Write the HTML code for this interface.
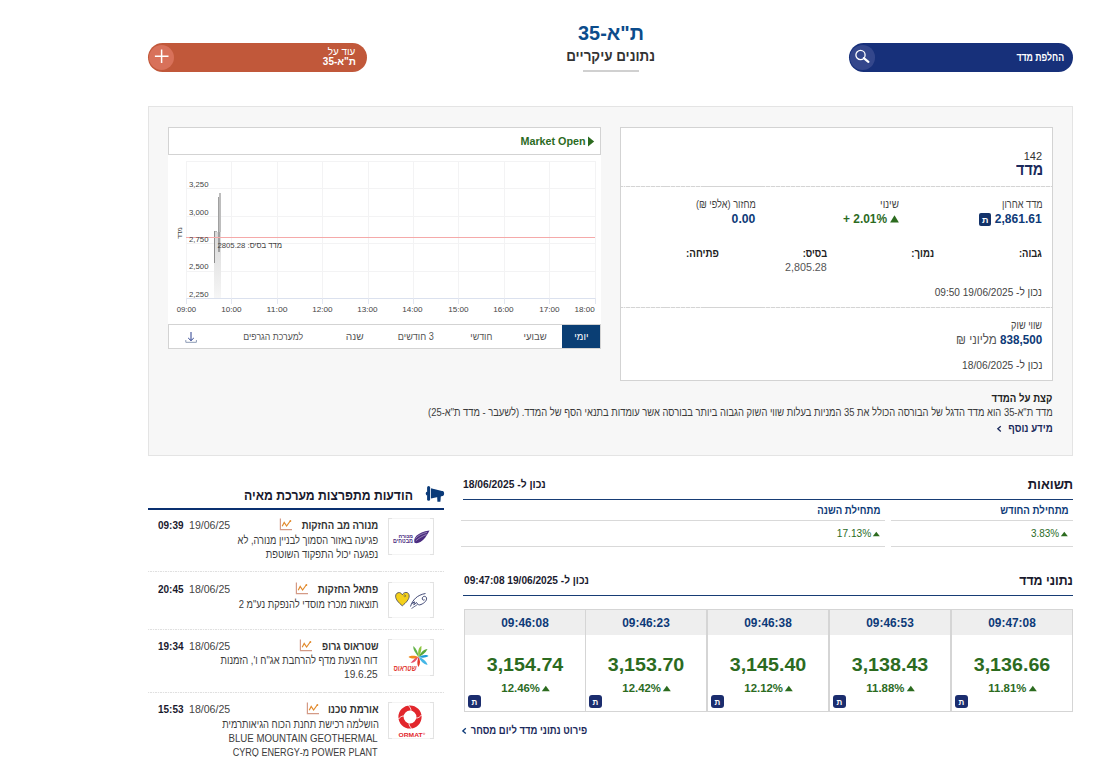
<!DOCTYPE html>
<html lang="he" dir="rtl">
<head>
<meta charset="utf-8">
<style>
*{margin:0;padding:0;box-sizing:border-box;}
html,body{width:1107px;height:757px;overflow:hidden;background:#fff;}
body{font-family:"Liberation Sans",sans-serif;color:#333;position:relative;}
.a{position:absolute;}
.t{position:absolute;white-space:nowrap;line-height:1;}
</style>
</head>
<body>
<div class="a" style="left:148px;top:43px;width:219px;height:29px;border-radius:14.5px;background:#c1583a;"></div>
<div class="a" style="left:149px;top:44.5px;width:25px;height:25.0px;border-radius:50%;background:#d8715a;"></div>
<svg class="a" style="left:154px;top:49px" width="15" height="15" viewBox="0 0 15 15"><path d="M7.6 0.5v13.6M0.9 7.3h13.6" stroke="#fff" stroke-width="1.5"/></svg>
<div class="a" style="left:849px;top:43px;width:224px;height:29px;border-radius:14.5px;background:#17307a;"></div>
<div class="a" style="left:849.5px;top:44.5px;width:25.5px;height:25.0px;border-radius:50%;background:#34478c;"></div>
<svg class="a" style="left:853px;top:48px" width="20" height="17" viewBox="0 0 20 17"><circle cx="7.5" cy="7" r="4.6" fill="none" stroke="#fff" stroke-width="1.3"/><path d="M10.8 10.2l4.6 3.6" stroke="#fff" stroke-width="2.2" stroke-linecap="round"/></svg>
<div class="a" style="left:583px;top:70px;width:56px;height:2px;background:#d0d0d0;"></div>
<div class="a" style="left:148px;top:106px;width:925px;height:350px;background:#f7f7f7;border:1px solid #e4e4e4;"></div>
<div class="a" style="left:168px;top:127px;width:433px;height:28px;background:#fff;border:1px solid #d3d3d3;"></div>
<svg class="a" style="left:587px;top:136px" width="8" height="11" viewBox="0 0 8 11"><path d="M1 0.5L7.2 5.5L1 10.5z" fill="#2c6b1f"/></svg>
<div class="a" style="left:168px;top:155px;width:433px;height:169px;background:#fff;"></div>
<div class="a" style="left:185.9px;top:161px;width:1px;height:138px;background:#f3f3f4;"></div><div class="a" style="left:231.3px;top:161px;width:1px;height:138px;background:#f3f3f4;"></div><div class="a" style="left:276.7px;top:161px;width:1px;height:138px;background:#f3f3f4;"></div><div class="a" style="left:322.1px;top:161px;width:1px;height:138px;background:#f3f3f4;"></div><div class="a" style="left:367.5px;top:161px;width:1px;height:138px;background:#f3f3f4;"></div><div class="a" style="left:412.9px;top:161px;width:1px;height:138px;background:#f3f3f4;"></div><div class="a" style="left:458.3px;top:161px;width:1px;height:138px;background:#f3f3f4;"></div><div class="a" style="left:503.7px;top:161px;width:1px;height:138px;background:#f3f3f4;"></div><div class="a" style="left:549.1px;top:161px;width:1px;height:138px;background:#f3f3f4;"></div><div class="a" style="left:594.5px;top:161px;width:1px;height:138px;background:#f3f3f4;"></div><div class="a" style="left:186px;top:160.5px;width:409px;height:1px;background:#f3f3f4;"></div><div class="a" style="left:186px;top:188.1px;width:409px;height:1px;background:#f3f3f4;"></div><div class="a" style="left:186px;top:215.7px;width:409px;height:1px;background:#f3f3f4;"></div><div class="a" style="left:186px;top:242.7px;width:409px;height:1px;background:#f3f3f4;"></div><div class="a" style="left:186px;top:270.7px;width:409px;height:1px;background:#f3f3f4;"></div>
<div class="a" style="left:186px;top:298px;width:409px;height:1px;background:#dbe1ee;"></div>
<div class="a" style="left:185.9px;top:298px;width:1.0px;height:6px;background:#e3e7f1;"></div>
<div class="a" style="left:231.3px;top:298px;width:1.0px;height:6px;background:#e3e7f1;"></div>
<div class="a" style="left:276.7px;top:298px;width:1.0px;height:6px;background:#e3e7f1;"></div>
<div class="a" style="left:322.1px;top:298px;width:1.0px;height:6px;background:#e3e7f1;"></div>
<div class="a" style="left:367.5px;top:298px;width:1.0px;height:6px;background:#e3e7f1;"></div>
<div class="a" style="left:412.9px;top:298px;width:1.0px;height:6px;background:#e3e7f1;"></div>
<div class="a" style="left:458.3px;top:298px;width:1.0px;height:6px;background:#e3e7f1;"></div>
<div class="a" style="left:503.7px;top:298px;width:1.0px;height:6px;background:#e3e7f1;"></div>
<div class="a" style="left:549.1px;top:298px;width:1.0px;height:6px;background:#e3e7f1;"></div>
<div class="a" style="left:594.5px;top:298px;width:1.0px;height:6px;background:#e3e7f1;"></div>
<div class="a" style="left:213.5px;top:232px;width:7.5px;height:66px;background:linear-gradient(#d8d8d8,#f6f6f6);"></div>
<div class="a" style="left:213.5px;top:230.5px;width:1.6999999999999886px;height:32.0px;background:#8e8e8e;"></div>
<div class="a" style="left:215.2px;top:230.5px;width:2.3000000000000114px;height:1.5px;background:#b5b5b5;"></div>
<div class="a" style="left:217.6px;top:197px;width:2.0px;height:55px;background:#a0a0a0;"></div>
<div class="a" style="left:219.4px;top:192.7px;width:1.4000000000000057px;height:39.30000000000001px;background:#bdbdbd;"></div>
<div class="a" style="left:186px;top:237.2px;width:409px;height:1.200000000000017px;background:#f5a9a9;"></div>
<div class="a" style="left:168px;top:324px;width:433px;height:25px;background:#fff;border:1px solid #d3d3d3;"></div>
<div class="a" style="left:562px;top:325px;width:38px;height:23px;background:#0a3e74;"></div>
<svg class="a" style="left:184px;top:330px" width="14" height="14" viewBox="0 0 14 14"><path d="M7 2v8.5M4.2 8l2.8 2.6L9.8 8" fill="none" stroke="#2b3f8f" stroke-width="1"/><path d="M1.8 10v2.3h10.6V10" fill="none" stroke="#8d9bb5" stroke-width="1"/></svg>
<div class="a" style="left:620px;top:127px;width:433px;height:254px;background:#fff;border:1px solid #d3d3d3;"></div>
<div class="a" style="left:621px;top:186px;width:431px;height:1px;background:repeating-linear-gradient(90deg,#d4d4d4 0 2px,#f2f2f2 2px 2.5px);"></div>
<div class="a" style="left:621px;top:307px;width:431px;height:1px;background:repeating-linear-gradient(90deg,#d4d4d4 0 2px,#f2f2f2 2px 2.5px);"></div>
<div class="a" style="left:979px;top:213px;width:12px;height:13px;border-radius:2px;background:#14336a;"></div>
<svg class="a" style="left:890px;top:215px" width="10" height="8" viewBox="0 0 10 8"><path d="M4.5 0.2L8.9 7.6H0.1z" fill="#2c6b1f"/></svg>
<div class="a" style="left:463px;top:499px;width:610px;height:1.1999999999999886px;background:#173d75;"></div>
<div class="a" style="left:461px;top:520px;width:424px;height:1px;background:#d9d9d9;"></div>
<div class="a" style="left:891px;top:520px;width:182px;height:1px;background:#d9d9d9;"></div>
<div class="a" style="left:461px;top:546px;width:424px;height:1px;background:#d9d9d9;"></div>
<div class="a" style="left:891px;top:546px;width:182px;height:1px;background:#d9d9d9;"></div>
<div class="a" style="left:463px;top:594.6px;width:610px;height:1.1999999999999318px;background:#173d75;"></div>
<div class="a" style="left:464px;top:609px;width:122px;height:103px;background:#fff;border:1px solid #d5d5d5;"></div>
<div class="a" style="left:465px;top:610px;width:120px;height:25px;background:#eeeeee;"></div>
<div class="a" style="left:468px;top:695px;width:13px;height:13px;border-radius:3px;background:#1b2d6e;"></div>
<div class="a" style="left:585px;top:609px;width:122px;height:103px;background:#fff;border:1px solid #d5d5d5;"></div>
<div class="a" style="left:586px;top:610px;width:120px;height:25px;background:#eeeeee;"></div>
<div class="a" style="left:589px;top:695px;width:13px;height:13px;border-radius:3px;background:#1b2d6e;"></div>
<div class="a" style="left:707px;top:609px;width:122px;height:103px;background:#fff;border:1px solid #d5d5d5;"></div>
<div class="a" style="left:708px;top:610px;width:120px;height:25px;background:#eeeeee;"></div>
<div class="a" style="left:711px;top:695px;width:13px;height:13px;border-radius:3px;background:#1b2d6e;"></div>
<div class="a" style="left:829px;top:609px;width:122px;height:103px;background:#fff;border:1px solid #d5d5d5;"></div>
<div class="a" style="left:830px;top:610px;width:120px;height:25px;background:#eeeeee;"></div>
<div class="a" style="left:833px;top:695px;width:13px;height:13px;border-radius:3px;background:#1b2d6e;"></div>
<div class="a" style="left:951px;top:609px;width:122px;height:103px;background:#fff;border:1px solid #d5d5d5;"></div>
<div class="a" style="left:952px;top:610px;width:120px;height:25px;background:#eeeeee;"></div>
<div class="a" style="left:955px;top:695px;width:13px;height:13px;border-radius:3px;background:#1b2d6e;"></div>
<div class="a" style="left:148px;top:508px;width:296px;height:2px;background:#0a3070;"></div>
<svg class="a" style="left:420px;top:482px" width="28" height="24" viewBox="0 0 28 24"><rect x="7.1" y="4.1" width="3" height="14.6" rx="1.5" fill="#0a3a78"/><ellipse cx="6.9" cy="11.6" rx="1.1" ry="1.8" fill="#0a3a78"/><path d="M10.9 6.3L22 9.1H22.6C23.5 9.1 24.1 10.3 24.1 11.6C24.1 12.9 23.5 14 22.6 14L10.9 16.6Z" fill="#0a3a78"/><path d="M17.1 13.6H20.9L20.4 19.7H17.4Z" fill="#0a3a78"/></svg>
<div class="a" style="left:388px;top:518px;width:46px;height:37px;background:#fff;border:1px solid #f4f4f4;border-left-color:#e2e2e2;border-right-color:#e2e2e2;border-radius:2px;"></div>
<div class="a" style="left:388px;top:518px;width:4px;height:1px;background:#e2e2e2;"></div>
<div class="a" style="left:388px;top:554px;width:4px;height:1px;background:#e2e2e2;"></div>
<div class="a" style="left:430px;top:518px;width:4px;height:1px;background:#e2e2e2;"></div>
<div class="a" style="left:430px;top:554px;width:4px;height:1px;background:#e2e2e2;"></div>
<div class="a" style="left:388px;top:582px;width:46px;height:36px;background:#fff;border:1px solid #f4f4f4;border-left-color:#e2e2e2;border-right-color:#e2e2e2;border-radius:2px;"></div>
<div class="a" style="left:388px;top:582px;width:4px;height:1px;background:#e2e2e2;"></div>
<div class="a" style="left:388px;top:617px;width:4px;height:1px;background:#e2e2e2;"></div>
<div class="a" style="left:430px;top:582px;width:4px;height:1px;background:#e2e2e2;"></div>
<div class="a" style="left:430px;top:617px;width:4px;height:1px;background:#e2e2e2;"></div>
<div class="a" style="left:388px;top:639px;width:46px;height:37px;background:#fff;border:1px solid #f4f4f4;border-left-color:#e2e2e2;border-right-color:#e2e2e2;border-radius:2px;"></div>
<div class="a" style="left:388px;top:639px;width:4px;height:1px;background:#e2e2e2;"></div>
<div class="a" style="left:388px;top:675px;width:4px;height:1px;background:#e2e2e2;"></div>
<div class="a" style="left:430px;top:639px;width:4px;height:1px;background:#e2e2e2;"></div>
<div class="a" style="left:430px;top:675px;width:4px;height:1px;background:#e2e2e2;"></div>
<div class="a" style="left:388px;top:702px;width:46px;height:37px;background:#fff;border:1px solid #f4f4f4;border-left-color:#e2e2e2;border-right-color:#e2e2e2;border-radius:2px;"></div>
<div class="a" style="left:388px;top:702px;width:4px;height:1px;background:#e2e2e2;"></div>
<div class="a" style="left:388px;top:738px;width:4px;height:1px;background:#e2e2e2;"></div>
<div class="a" style="left:430px;top:702px;width:4px;height:1px;background:#e2e2e2;"></div>
<div class="a" style="left:430px;top:738px;width:4px;height:1px;background:#e2e2e2;"></div>
<div class="a" style="left:148px;top:571px;width:296px;height:1px;background:repeating-linear-gradient(90deg,#e0e0e0 0 1.5px,#fafafa 1.5px 2.5px);"></div>
<div class="a" style="left:148px;top:629px;width:296px;height:1px;background:repeating-linear-gradient(90deg,#e0e0e0 0 1.5px,#fafafa 1.5px 2.5px);"></div>
<div class="a" style="left:148px;top:692px;width:296px;height:1px;background:repeating-linear-gradient(90deg,#e0e0e0 0 1.5px,#fafafa 1.5px 2.5px);"></div>
<svg class="a" style="left:279px;top:518px" width="14" height="13" viewBox="0 0 14 13"><path d="M1.4 0.5V11.6H13" fill="none" stroke="#d49a86" stroke-width="1.2"/><path d="M3.2 8.2L5.2 4.4L7.6 8L11.2 3" fill="none" stroke="#e28a2c" stroke-width="1.2"/><circle cx="11.4" cy="3" r="0.9" fill="#e28a2c"/></svg>
<svg class="a" style="left:295px;top:581.5px" width="14" height="13" viewBox="0 0 14 13"><path d="M1.4 0.5V11.6H13" fill="none" stroke="#d49a86" stroke-width="1.2"/><path d="M3.2 8.2L5.2 4.4L7.6 8L11.2 3" fill="none" stroke="#e28a2c" stroke-width="1.2"/><circle cx="11.4" cy="3" r="0.9" fill="#e28a2c"/></svg>
<svg class="a" style="left:299px;top:638.5px" width="14" height="13" viewBox="0 0 14 13"><path d="M1.4 0.5V11.6H13" fill="none" stroke="#d49a86" stroke-width="1.2"/><path d="M3.2 8.2L5.2 4.4L7.6 8L11.2 3" fill="none" stroke="#e28a2c" stroke-width="1.2"/><circle cx="11.4" cy="3" r="0.9" fill="#e28a2c"/></svg>
<svg class="a" style="left:306px;top:701.5px" width="14" height="13" viewBox="0 0 14 13"><path d="M1.4 0.5V11.6H13" fill="none" stroke="#d49a86" stroke-width="1.2"/><path d="M3.2 8.2L5.2 4.4L7.6 8L11.2 3" fill="none" stroke="#e28a2c" stroke-width="1.2"/><circle cx="11.4" cy="3" r="0.9" fill="#e28a2c"/></svg>
<svg class="a" style="left:388px;top:518px" width="46" height="37" viewBox="0 0 46 37"><path d="M26.5 24.8C25 20 29 14.5 41.5 12.6C38 19.5 34 25 28.5 25.2C27.8 25.2 27 25 26.5 24.8z" fill="#4b2c80"/><path d="M27.5 20.5C30 17.5 34 15.5 39 14.3M27.8 22.8C31 20 34.5 18 38.5 16.5" stroke="#fff" stroke-width="0.5" fill="none" opacity="0.8"/><text x="17.75" y="19.8" direction="ltr" font-family="Liberation Sans" font-weight="bold" font-size="5.6" fill="#4b2c80" text-anchor="middle" textLength="14.5" lengthAdjust="spacingAndGlyphs">מנורה</text><text x="14.95" y="24.8" direction="ltr" font-family="Liberation Sans" font-weight="bold" font-size="6" fill="#4b2c80" text-anchor="middle" textLength="20" lengthAdjust="spacingAndGlyphs">מבטחים</text></svg>
<svg class="a" style="left:388px;top:582px" width="46" height="36" viewBox="0 0 46 36"><path d="M14.3 23.8C10.5 20.6 7.6 17.6 7.6 14.2C7.6 11.6 9.6 10.4 11.4 10.6C12.8 10.8 13.8 11.8 14.3 12.8C14.9 11.6 16.2 10.4 18 10.4C20 10.4 21.2 12 21.2 14C21.2 17.4 18.2 20.6 14.3 23.8z" fill="#f4d01a" stroke="#3c3f5c" stroke-width="0.8"/><path d="M15.6 13.6C16.2 12.6 17.8 12.8 17.6 14.2C17.4 15 16.4 15 16.2 14.4" fill="none" stroke="#3c3f5c" stroke-width="0.6"/><path d="M22.5 24.5C24.5 18 29 13 37.5 11.5" fill="none" stroke="#2c3566" stroke-width="0.9"/><path d="M24 21.5L26.5 19.8L25.8 22.8L28.5 20.5C29.5 22.5 31 23.5 33 22.5C36.5 21 39 18.5 38.5 16C38 13.8 35 13.8 34.3 16C33.8 17.6 35.5 18.8 36.6 17.8" fill="none" stroke="#2c3566" stroke-width="0.9"/><path d="M23.5 26.5L29.5 22.5" fill="none" stroke="#2c3566" stroke-width="0.7"/></svg>
<svg class="a" style="left:388px;top:639px" width="46" height="37" viewBox="0 0 46 37"><g transform="translate(30.5,18)"><path d="M0 0C-3 -4 -6 -8 -5 -11C-2 -8 0 -4 0 0z" fill="#62b34a"/><path d="M0 0C-1 -5 0 -10 3 -11C3 -6 2 -3 0 0z" fill="#8dc63f"/><path d="M0 0C2 -4 5 -8 9 -8C7 -4 4 -2 0 0z" fill="#5aa83a"/><path d="M0 0C4 -2 8 -3 10 -1C7 1 4 1 0 0z" fill="#1e9ad6"/><path d="M0 0C4 1 8 4 9 8C5 7 2 4 0 0z" fill="#44b6e6"/><path d="M0 0C2 3 2 7 0 10C-2 7 -1 3 0 0z" fill="#e43a2a"/><path d="M0 0C-3 2 -7 2 -10 0C-7 -2 -3 -1 0 0z" fill="#f28a1e"/><path d="M0 0C-3 0 -6 4 -8 6C-4 6 -2 3 0 0z" fill="#e84f6a"/></g><text x="17" y="32" direction="ltr" font-family="Liberation Sans" font-style="italic" font-weight="bold" font-size="8.5" fill="#e23a34" text-anchor="middle" textLength="23" lengthAdjust="spacingAndGlyphs">שטראוס</text></svg>
<svg class="a" style="left:388px;top:702px" width="46" height="37" viewBox="0 0 46 37"><circle cx="22" cy="15" r="9" fill="none" stroke="#e2262c" stroke-width="5.2"/><path d="M20 3.2C23 6 23.5 8.5 22.5 9.8M33.6 13C31 16 28.5 16.5 27.2 15.5M24 26.8C21 24 20.5 21.5 21.5 20.2M10.4 17C13 14 15.5 13.5 16.8 14.5" fill="none" stroke="#fff" stroke-width="0.9"/><text x="22.6" y="35.3" direction="ltr" font-family="Liberation Sans" font-weight="bold" font-size="5.6" fill="#e2262c" text-anchor="middle" textLength="24" lengthAdjust="spacingAndGlyphs">ORMAT</text><circle cx="36" cy="31.8" r="0.8" fill="none" stroke="#e2262c" stroke-width="0.4"/></svg>
<div class="a" style="left:172px;top:228px;width:16px;height:10px;font-size:6.5px;line-height:10px;color:#444;text-align:center;transform:rotate(-90deg);white-space:nowrap;direction:rtl;">מדד</div>
<svg class="a" style="left:995px;top:424px" width="8" height="10" viewBox="0 0 8 10"><path d="M5.8 2.2L2.8 4.8L5.8 7.5" fill="none" stroke="#1b2a5c" stroke-width="1.3"/></svg>
<svg class="a" style="left:1060px;top:531px" width="9" height="6" viewBox="0 0 9 6"><path d="M4.3 0.8L7.8 5.3H0.8z" fill="#2c6b1f"/></svg>
<svg class="a" style="left:872px;top:531px" width="9" height="6" viewBox="0 0 9 6"><path d="M4.3 0.8L7.8 5.3H0.8z" fill="#2c6b1f"/></svg>
<svg class="a" style="left:541px;top:685px" width="10" height="7" viewBox="0 0 10 7"><path d="M4.8 0.8L8.8 6.3H0.8z" fill="#2c6b1f"/></svg>
<svg class="a" style="left:662px;top:685px" width="10" height="7" viewBox="0 0 10 7"><path d="M4.8 0.8L8.8 6.3H0.8z" fill="#2c6b1f"/></svg>
<svg class="a" style="left:784px;top:685px" width="10" height="7" viewBox="0 0 10 7"><path d="M4.8 0.8L8.8 6.3H0.8z" fill="#2c6b1f"/></svg>
<svg class="a" style="left:906px;top:685px" width="10" height="7" viewBox="0 0 10 7"><path d="M4.8 0.8L8.8 6.3H0.8z" fill="#2c6b1f"/></svg>
<svg class="a" style="left:1028px;top:685px" width="10" height="7" viewBox="0 0 10 7"><path d="M4.8 0.8L8.8 6.3H0.8z" fill="#2c6b1f"/></svg>
<svg class="a" style="left:460px;top:726px" width="8" height="10" viewBox="0 0 8 10"><path d="M5.8 2.2L2.8 5L5.8 7.6" fill="none" stroke="#0d3a78" stroke-width="1.3"/></svg>
<div class="t" style="top:46.30px;font-size:10.5px;color:#fff;direction:rtl;right:751.77px;transform:scaleX(0.9379);transform-origin:right center;">עוד על</div>
<div class="t" style="top:56.30px;font-size:10.5px;color:#fff;direction:rtl;font-weight:bold;right:751.17px;transform:scaleX(0.9471);transform-origin:right center;">ת"א-35</div>
<div class="t" style="top:22.80px;font-size:20.5px;color:#0b4c8c;direction:rtl;font-weight:bold;right:462.97px;transform:scaleX(0.9701);transform-origin:right center;">ת"א-35</div>
<div class="t" style="top:48.70px;font-size:14.5px;color:#333;direction:rtl;font-weight:bold;right:452.15px;transform:scaleX(0.9255);transform-origin:right center;">נתונים עיקריים</div>
<div class="t" style="top:51.50px;font-size:11px;color:#fff;direction:rtl;font-weight:bold;right:43.30px;transform:scaleX(0.7933);transform-origin:right center;">החלפת מדד</div>
<div class="t" style="top:136.70px;font-size:10px;color:#2c6b1f;direction:ltr;font-weight:bold;right:521.88px;transform:scaleX(1.0750);transform-origin:right center;">Market Open</div>
<div class="t" style="top:180.50px;font-size:7.5px;color:#444;direction:ltr;left:189.20px;transform:scaleX(1.0368);transform-origin:left center;">3,250</div>
<div class="t" style="top:208.50px;font-size:7.5px;color:#444;direction:ltr;left:189.20px;transform:scaleX(1.0368);transform-origin:left center;">3,000</div>
<div class="t" style="top:235.50px;font-size:7.5px;color:#444;direction:ltr;left:189.20px;transform:scaleX(1.0368);transform-origin:left center;">2,750</div>
<div class="t" style="top:262.50px;font-size:7.5px;color:#444;direction:ltr;left:189.20px;transform:scaleX(1.0368);transform-origin:left center;">2,500</div>
<div class="t" style="top:290.50px;font-size:7.5px;color:#444;direction:ltr;left:189.20px;transform:scaleX(1.0368);transform-origin:left center;">2,250</div>
<div class="t" style="top:306.00px;font-size:7.5px;color:#444;direction:ltr;left:176.90px;transform:scaleX(1.0316);transform-origin:center center;">09:00</div>
<div class="t" style="top:306.00px;font-size:7.5px;color:#444;direction:ltr;left:221.75px;transform:scaleX(1.0889);transform-origin:center center;">10:00</div>
<div class="t" style="top:306.00px;font-size:7.5px;color:#444;direction:ltr;left:267.64px;transform:scaleX(1.1529);transform-origin:center center;">11:00</div>
<div class="t" style="top:306.00px;font-size:7.5px;color:#444;direction:ltr;left:312.55px;transform:scaleX(1.0889);transform-origin:center center;">12:00</div>
<div class="t" style="top:306.00px;font-size:7.5px;color:#444;direction:ltr;left:357.95px;transform:scaleX(1.0889);transform-origin:center center;">13:00</div>
<div class="t" style="top:306.00px;font-size:7.5px;color:#444;direction:ltr;left:403.35px;transform:scaleX(1.0889);transform-origin:center center;">14:00</div>
<div class="t" style="top:306.00px;font-size:7.5px;color:#444;direction:ltr;left:448.75px;transform:scaleX(1.0889);transform-origin:center center;">15:00</div>
<div class="t" style="top:306.00px;font-size:7.5px;color:#444;direction:ltr;left:494.15px;transform:scaleX(1.0889);transform-origin:center center;">16:00</div>
<div class="t" style="top:306.00px;font-size:7.5px;color:#444;direction:ltr;left:539.55px;transform:scaleX(1.0889);transform-origin:center center;">17:00</div>
<div class="t" style="top:306.00px;font-size:7.5px;color:#444;direction:ltr;right:512.24px;transform:scaleX(1.0833);transform-origin:right center;">18:00</div>
<div class="t" style="top:241.50px;font-size:8px;color:#444;direction:rtl;right:824.45px;transform:scaleX(0.9627);transform-origin:right center;">מדד בסיס: 2805.28</div>
<div class="t" style="top:331.50px;font-size:10px;color:#fff;direction:rtl;left:574.06px;transform:scaleX(0.9615);transform-origin:center center;">יומי</div>
<div class="t" style="top:331.50px;font-size:10px;color:#555;direction:rtl;left:522.52px;transform:scaleX(0.9565);transform-origin:center center;">שבועי</div>
<div class="t" style="top:331.50px;font-size:10px;color:#555;direction:rtl;left:468.77px;transform:scaleX(0.8913);transform-origin:center center;">חודשי</div>
<div class="t" style="top:331.50px;font-size:10px;color:#555;direction:rtl;left:396.27px;transform:scaleX(0.9079);transform-origin:center center;">3 חודשים</div>
<div class="t" style="top:331.50px;font-size:10px;color:#555;direction:rtl;left:346.05px;transform:scaleX(1.0188);transform-origin:center center;">שנה</div>
<div class="t" style="top:331.50px;font-size:10px;color:#555;direction:rtl;left:238.78px;transform:scaleX(0.8731);transform-origin:center center;">למערכת הגרפים</div>
<div class="t" style="top:150.50px;font-size:11px;color:#333;direction:rtl;right:64.94px;">142</div>
<div class="t" style="top:161.40px;font-size:17px;color:#1b2a5c;direction:rtl;font-weight:bold;right:64.34px;transform:scaleX(0.8419);transform-origin:right center;">מדד</div>
<div class="t" style="top:199.00px;font-size:11px;color:#444;direction:rtl;right:64.84px;transform:scaleX(0.8340);transform-origin:right center;">מדד אחרון</div>
<div class="t" style="top:211.70px;font-size:13px;color:#0d3a78;direction:ltr;font-weight:bold;right:65.66px;transform:scaleX(0.9255);transform-origin:right center;">2,861.61</div>
<div class="t" style="top:215.50px;font-size:9px;color:#fff;direction:rtl;font-weight:bold;left:982.00px;">ת</div>
<div class="t" style="top:198.80px;font-size:11px;color:#444;direction:rtl;right:208.60px;transform:scaleX(0.9000);transform-origin:right center;">שינוי</div>
<div class="t" style="top:211.70px;font-size:13px;color:#2c6b1f;direction:ltr;font-weight:bold;right:219.93px;transform:scaleX(0.9167);transform-origin:right center;">+ 2.01%</div>
<div class="t" style="top:198.80px;font-size:11px;color:#444;direction:rtl;right:351.59px;transform:scaleX(0.8338);transform-origin:right center;">מחזור (אלפי ₪)</div>
<div class="t" style="top:211.70px;font-size:13px;color:#0d3a78;direction:ltr;font-weight:bold;right:351.91px;transform:scaleX(0.9360);transform-origin:right center;">0.00</div>
<div class="t" style="top:248.30px;font-size:11px;color:#222;direction:rtl;font-weight:bold;right:65.33px;transform:scaleX(0.8538);transform-origin:right center;">גבוה:</div>
<div class="t" style="top:248.30px;font-size:11px;color:#222;direction:rtl;font-weight:bold;right:172.75px;transform:scaleX(0.8720);transform-origin:right center;">נמוך:</div>
<div class="t" style="top:248.30px;font-size:11px;color:#222;direction:rtl;font-weight:bold;right:279.86px;transform:scaleX(0.8357);transform-origin:right center;">בסיס:</div>
<div class="t" style="top:248.30px;font-size:11px;color:#222;direction:rtl;font-weight:bold;right:388.03px;transform:scaleX(0.8889);transform-origin:right center;">פתיחה:</div>
<div class="t" style="top:262.20px;font-size:11px;color:#555;direction:ltr;right:280.17px;transform:scaleX(0.9767);transform-origin:right center;">2,805.28</div>
<div class="t" style="top:287.00px;font-size:11px;color:#444;direction:rtl;right:65.07px;transform:scaleX(0.9171);transform-origin:right center;">נכון ל- 19/06/2025 09:50</div>
<div class="t" style="top:320.30px;font-size:11px;color:#444;direction:rtl;right:65.06px;transform:scaleX(0.8351);transform-origin:right center;">שווי שוק</div>
<div class="t" style="top:333.10px;font-size:13px;color:#555;direction:rtl;right:64.96px;transform:scaleX(0.8958);transform-origin:right center;"><b style="color:#0d3a78">838,500</b> מליוני ₪</div>
<div class="t" style="top:360.10px;font-size:11px;color:#444;direction:rtl;right:64.69px;transform:scaleX(0.9294);transform-origin:right center;">נכון ל- 18/06/2025</div>
<div class="t" style="top:392.70px;font-size:11px;color:#222;direction:rtl;font-weight:bold;right:54.61px;transform:scaleX(0.8754);transform-origin:right center;">קצת על המדד</div>
<div class="t" style="top:406.80px;font-size:11px;color:#3c3c3c;direction:rtl;right:54.47px;transform:scaleX(0.8525);transform-origin:right center;">מדד ת"א-35 הוא מדד הדגל של הבורסה הכולל את 35 המניות בעלות שווי השוק הגבוה ביותר בבורסה אשר עומדות בתנאי הסף של המדד. (לשעבר - מדד ת"א-25)</div>
<div class="t" style="top:422.70px;font-size:11px;color:#1b2a5c;direction:rtl;font-weight:bold;right:54.25px;transform:scaleX(0.8760);transform-origin:right center;">מידע נוסף</div>
<div class="t" style="top:476.80px;font-size:14px;color:#1a1a2e;direction:rtl;font-weight:bold;right:33.59px;transform:scaleX(0.9250);transform-origin:right center;">תשואות</div>
<div class="t" style="top:479.30px;font-size:11px;color:#1a1a2e;direction:rtl;font-weight:bold;left:463.10px;transform:scaleX(0.9341);transform-origin:left center;">נכון ל- 18/06/2025</div>
<div class="t" style="top:505.00px;font-size:11px;color:#0d3a78;direction:rtl;font-weight:bold;right:38.54px;transform:scaleX(0.8818);transform-origin:right center;">מתחילת החודש</div>
<div class="t" style="top:505.00px;font-size:11px;color:#0d3a78;direction:rtl;font-weight:bold;right:226.65px;transform:scaleX(0.8708);transform-origin:right center;">מתחילת השנה</div>
<div class="t" style="top:527.50px;font-size:11px;color:#2c6b1f;direction:ltr;right:47.92px;transform:scaleX(0.9032);transform-origin:right center;">3.83%</div>
<div class="t" style="top:527.50px;font-size:11px;color:#2c6b1f;direction:ltr;right:235.91px;transform:scaleX(0.9250);transform-origin:right center;">17.13%</div>
<div class="t" style="top:572.70px;font-size:14px;color:#1a1a2e;direction:rtl;font-weight:bold;right:33.99px;transform:scaleX(0.8817);transform-origin:right center;">נתוני מדד</div>
<div class="t" style="top:575.40px;font-size:11px;color:#1a1a2e;direction:rtl;font-weight:bold;left:463.50px;transform:scaleX(0.9200);transform-origin:left center;">נכון ל- 19/06/2025 09:47:08</div>
<div class="t" style="top:616.80px;font-size:12px;color:#0d3a78;direction:ltr;font-weight:bold;left:501.15px;transform:scaleX(0.9896);transform-origin:center center;">09:46:08</div>
<div class="t" style="top:654.80px;font-size:19px;color:#2c6b1f;direction:ltr;font-weight:bold;left:488.00px;transform:scaleX(1.0351);transform-origin:center center;">3,154.74</div>
<div class="t" style="top:682.90px;font-size:11px;color:#2c6b1f;direction:ltr;font-weight:bold;left:501.66px;transform:scaleX(1.0351);transform-origin:center center;">12.46%</div>
<div class="t" style="top:698.50px;font-size:8px;color:#fff;direction:rtl;font-weight:bold;left:471.50px;">ת</div>
<div class="t" style="top:616.80px;font-size:12px;color:#0d3a78;direction:ltr;font-weight:bold;left:622.15px;transform:scaleX(0.9896);transform-origin:center center;">09:46:23</div>
<div class="t" style="top:654.80px;font-size:19px;color:#2c6b1f;direction:ltr;font-weight:bold;left:609.00px;transform:scaleX(1.0351);transform-origin:center center;">3,153.70</div>
<div class="t" style="top:682.90px;font-size:11px;color:#2c6b1f;direction:ltr;font-weight:bold;left:622.66px;transform:scaleX(1.0351);transform-origin:center center;">12.42%</div>
<div class="t" style="top:698.50px;font-size:8px;color:#fff;direction:rtl;font-weight:bold;left:592.50px;">ת</div>
<div class="t" style="top:616.80px;font-size:12px;color:#0d3a78;direction:ltr;font-weight:bold;left:744.15px;transform:scaleX(0.9896);transform-origin:center center;">09:46:38</div>
<div class="t" style="top:654.80px;font-size:19px;color:#2c6b1f;direction:ltr;font-weight:bold;left:731.00px;transform:scaleX(1.0351);transform-origin:center center;">3,145.40</div>
<div class="t" style="top:682.90px;font-size:11px;color:#2c6b1f;direction:ltr;font-weight:bold;left:744.66px;transform:scaleX(1.0351);transform-origin:center center;">12.12%</div>
<div class="t" style="top:698.50px;font-size:8px;color:#fff;direction:rtl;font-weight:bold;left:714.50px;">ת</div>
<div class="t" style="top:616.80px;font-size:12px;color:#0d3a78;direction:ltr;font-weight:bold;left:866.15px;transform:scaleX(0.9896);transform-origin:center center;">09:46:53</div>
<div class="t" style="top:654.80px;font-size:19px;color:#2c6b1f;direction:ltr;font-weight:bold;left:853.00px;transform:scaleX(1.0351);transform-origin:center center;">3,138.43</div>
<div class="t" style="top:682.90px;font-size:11px;color:#2c6b1f;direction:ltr;font-weight:bold;left:866.64px;transform:scaleX(1.0351);transform-origin:center center;">11.88%</div>
<div class="t" style="top:698.50px;font-size:8px;color:#fff;direction:rtl;font-weight:bold;left:836.50px;">ת</div>
<div class="t" style="top:616.80px;font-size:12px;color:#0d3a78;direction:ltr;font-weight:bold;left:988.15px;transform:scaleX(0.9896);transform-origin:center center;">09:47:08</div>
<div class="t" style="top:654.80px;font-size:19px;color:#2c6b1f;direction:ltr;font-weight:bold;left:975.00px;transform:scaleX(1.0351);transform-origin:center center;">3,136.66</div>
<div class="t" style="top:682.90px;font-size:11px;color:#2c6b1f;direction:ltr;font-weight:bold;left:988.64px;transform:scaleX(1.0351);transform-origin:center center;">11.81%</div>
<div class="t" style="top:698.50px;font-size:8px;color:#fff;direction:rtl;font-weight:bold;left:958.50px;">ת</div>
<div class="t" style="top:725.00px;font-size:11px;color:#1b2a5c;direction:rtl;font-weight:bold;right:519.53px;transform:scaleX(0.8615);transform-origin:right center;">פירוט נתוני מדד ליום מסחר</div>
<div class="t" style="top:488.00px;font-size:14px;color:#1a1a2e;direction:rtl;font-weight:bold;right:694.22px;transform:scaleX(0.8708);transform-origin:right center;">הודעות מתפרצות מערכת מאיה</div>
<div class="t" style="top:519.70px;font-size:11px;color:#333;direction:rtl;font-weight:bold;right:728.82px;transform:scaleX(0.8682);transform-origin:right center;">מנורה מב החזקות</div>
<div class="t" style="top:519.70px;font-size:11px;color:#444;direction:ltr;left:188.94px;transform:scaleX(0.9619);transform-origin:left center;">19/06/25</div>
<div class="t" style="top:519.70px;font-size:11px;color:#1a1a2e;direction:ltr;font-weight:bold;left:158.00px;transform:scaleX(0.9071);transform-origin:left center;">09:39</div>
<div class="t" style="top:535.10px;font-size:11px;color:#3c3c3c;direction:rtl;right:728.95px;transform:scaleX(0.8407);transform-origin:right center;">פגיעה באזור הסמוך לבניין מנורה, לא</div>
<div class="t" style="top:548.70px;font-size:11px;color:#3c3c3c;direction:rtl;right:728.88px;transform:scaleX(0.8573);transform-origin:right center;">נפגעה יכול התפקוד השוטפת</div>
<div class="t" style="top:584.40px;font-size:11px;color:#333;direction:rtl;font-weight:bold;right:728.77px;transform:scaleX(0.8725);transform-origin:right center;">פתאל החזקות</div>
<div class="t" style="top:584.40px;font-size:11px;color:#444;direction:ltr;left:188.94px;transform:scaleX(0.9619);transform-origin:left center;">18/06/25</div>
<div class="t" style="top:584.40px;font-size:11px;color:#1a1a2e;direction:ltr;font-weight:bold;left:158.00px;transform:scaleX(0.9071);transform-origin:left center;">20:45</div>
<div class="t" style="top:598.60px;font-size:11px;color:#3c3c3c;direction:rtl;right:728.68px;transform:scaleX(0.8500);transform-origin:right center;">תוצאות מכרז מוסדי להנפקת נע"מ 2</div>
<div class="t" style="top:640.50px;font-size:11px;color:#333;direction:rtl;font-weight:bold;right:728.64px;transform:scaleX(0.8485);transform-origin:right center;">שטראוס גרופ</div>
<div class="t" style="top:640.50px;font-size:11px;color:#444;direction:ltr;left:188.94px;transform:scaleX(0.9619);transform-origin:left center;">18/06/25</div>
<div class="t" style="top:640.50px;font-size:11px;color:#1a1a2e;direction:ltr;font-weight:bold;left:158.00px;transform:scaleX(0.9071);transform-origin:left center;">19:34</div>
<div class="t" style="top:655.40px;font-size:11px;color:#3c3c3c;direction:rtl;right:729.39px;transform:scaleX(0.8508);transform-origin:right center;">דוח הצעת מדף להרחבת אג"ח ו', הזמנות</div>
<div class="t" style="top:669.00px;font-size:11px;color:#3c3c3c;direction:rtl;right:729.27px;transform:scaleX(0.9167);transform-origin:right center;">19.6.25</div>
<div class="t" style="top:704.30px;font-size:11px;color:#333;direction:rtl;font-weight:bold;right:728.56px;transform:scaleX(0.8804);transform-origin:right center;">אורמת טכנו</div>
<div class="t" style="top:704.30px;font-size:11px;color:#444;direction:ltr;left:188.94px;transform:scaleX(0.9619);transform-origin:left center;">18/06/25</div>
<div class="t" style="top:704.30px;font-size:11px;color:#1a1a2e;direction:ltr;font-weight:bold;left:158.00px;transform:scaleX(0.9071);transform-origin:left center;">15:53</div>
<div class="t" style="top:719.40px;font-size:11px;color:#3c3c3c;direction:rtl;right:728.32px;transform:scaleX(0.8473);transform-origin:right center;">הושלמה רכישת תחנת הכוח הגיאותרמית</div>
<div class="t" style="top:733.00px;font-size:11px;color:#3c3c3c;direction:rtl;right:729.25px;transform:scaleX(0.8793);transform-origin:right center;">BLUE MOUNTAIN GEOTHERMAL</div>
<div class="t" style="top:746.60px;font-size:11px;color:#3c3c3c;direction:rtl;right:729.28px;transform:scaleX(0.8256);transform-origin:right center;">POWER PLANT מ-CYRQ ENERGY</div>
</body>
</html>
